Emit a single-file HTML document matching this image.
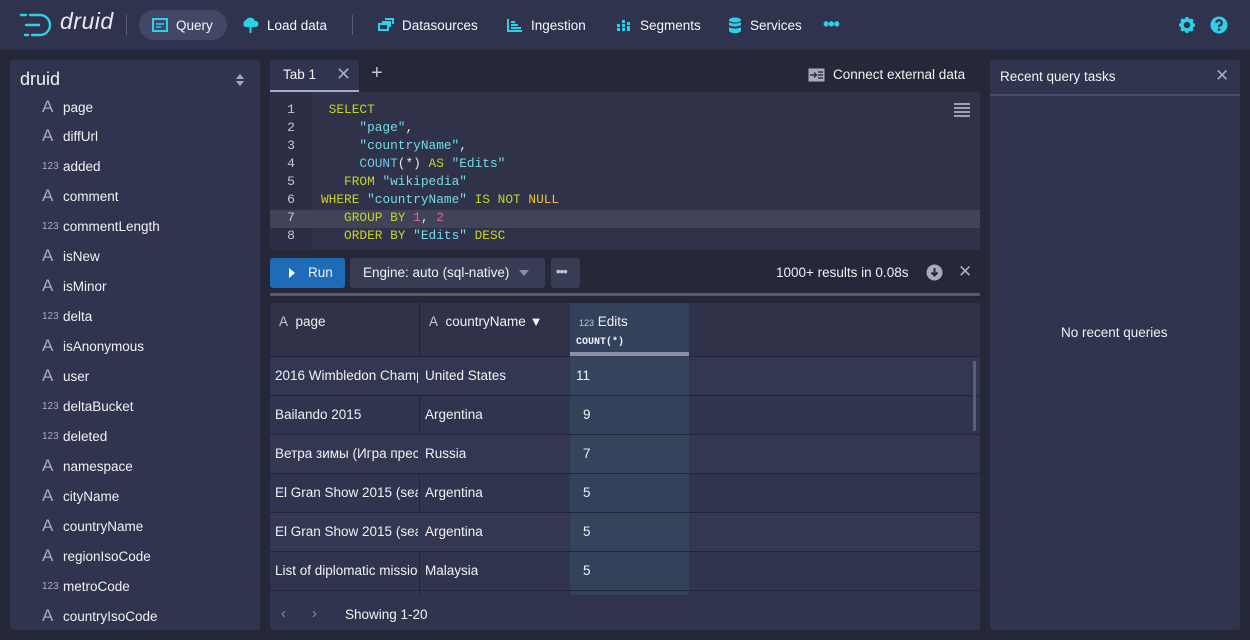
<!DOCTYPE html>
<html><head><meta charset="utf-8"><style>
*{box-sizing:border-box;margin:0;padding:0}
body{width:1250px;height:640px;background:#252839;font-family:"Liberation Sans",sans-serif;color:#f0f2f5;font-size:13.5px;position:relative;overflow:hidden}
.abs{position:absolute}
.nav{left:0;top:0;width:1250px;height:50px;background:#30334d}
.ni{position:absolute;top:0;height:50px;display:flex;align-items:center;font-size:13.5px;color:#f5f8fa}
.ni svg{margin-right:8px}
.panel{background:#30344e;border-radius:3px}
.col{position:absolute;left:42px;font-size:13.5px;display:flex;align-items:center;height:20px}
.col .ic{width:21px;color:#a7abbd;font-size:17px;text-align:left}
.col .n{width:21px;color:#a7abbd;font-size:10px}
.code{font-family:"Liberation Mono",monospace;font-size:12.8px;white-space:pre;position:absolute;left:0;line-height:18px}
.kw{color:#c6d22b}.st{color:#75dbe6}.fn{color:#6fc8e6}.nm{color:#f058b8}.wh{color:#e8e8e8}.nul{color:#f0c030}
.ln{position:absolute;left:270px;width:42px;text-align:center;font-family:"Liberation Mono",monospace;font-size:13px;color:#c4c7d2;line-height:18px}
.row{position:absolute;left:270px;width:710px;height:39px;border-bottom:1px solid #23263a;font-size:13.5px}
.row div{position:absolute;top:0;height:38px;line-height:38px;overflow:hidden;white-space:nowrap}
</style></head><body>
<div class="abs nav"></div>
<svg class="abs" style="left:18px;top:12px" width="38" height="26" viewBox="0 0 38 26"><g fill="none" stroke="#2ed0e8" stroke-width="2.4" stroke-linecap="round"><path d="M12 3h10a10 10 0 0 1 0 20H14"/><path d="M8 13h13"/><path d="M3 3h5"/><path d="M7 23h3"/></g></svg>
<div class="abs" style="left:60px;top:8px;font-size:23px;color:#e8eaf0;font-style:italic;font-weight:300;letter-spacing:0.5px">druid</div>
<div class="abs" style="left:126px;top:15px;width:1px;height:20px;background:#5a5e78"></div>
<div class="abs" style="left:139px;top:10px;width:88px;height:30px;border-radius:15px;background:#434766"></div>
<div class="ni" style="left:152px"><svg width="16" height="14" viewBox="0 0 16 14"><rect x="1" y="1" width="14" height="12" fill="none" stroke="#2ed0e8" stroke-width="2"/><path d="M4 6h8M4 9h5" stroke="#2ed0e8" stroke-width="1.6"/></svg>Query</div>
<div class="ni" style="left:242px"><svg width="17" height="16" viewBox="0 0 17 16"><path d="M3 10a4 4 0 0 1 1-7 5 5 0 0 1 9 1 3 3 0 0 1 1 6h-3l-2.5-3L6 10z" fill="#2ed0e8"/><path d="M8.5 7v9M5.5 10l3-3 3 3" stroke="#2ed0e8" stroke-width="2" fill="none"/></svg>Load data</div>
<div class="abs" style="left:352px;top:15px;width:1px;height:20px;background:#5a5e78"></div>
<div class="ni" style="left:378px"><svg width="16" height="14" viewBox="0 0 16 14"><rect x="1" y="6" width="9" height="6" fill="none" stroke="#2ed0e8" stroke-width="2"/><path d="M4 4h8v5M7 1h8v5" fill="none" stroke="#2ed0e8" stroke-width="2"/></svg>Datasources</div>
<div class="ni" style="left:507px"><svg width="16" height="14" viewBox="0 0 16 14"><path d="M1 1v12h14M4 4h4M4 7h7M4 10h10" stroke="#2ed0e8" stroke-width="2" fill="none"/></svg>Ingestion</div>
<div class="ni" style="left:616px"><svg width="16" height="14" viewBox="0 0 16 14"><g fill="#2ed0e8"><rect x="1" y="6" width="3" height="3"/><rect x="1" y="10" width="3" height="3"/><rect x="6" y="2" width="3" height="3"/><rect x="6" y="6" width="3" height="3"/><rect x="6" y="10" width="3" height="3"/><rect x="11" y="4" width="3" height="3"/><rect x="11" y="8" width="3" height="5"/></g></svg>Segments</div>
<div class="ni" style="left:728px"><svg width="14" height="17" viewBox="0 0 14 17"><g fill="#2ed0e8"><ellipse cx="7" cy="3" rx="6" ry="2.5"/><path d="M1 5c2 2 10 2 12 0v3c-2 2-10 2-12 0z"/><path d="M1 10c2 2 10 2 12 0v4c-2 3-10 3-12 0z"/></g></svg>Services</div>
<div class="abs" style="left:823px;top:14px;color:#2ed0e8;font-size:18px;font-weight:bold;letter-spacing:-1px">•••</div>
<svg class="abs" style="left:1178px;top:16px" width="18" height="18" viewBox="0 0 18 18"><circle cx="9" cy="9" r="5" fill="none" stroke="#2ed0e8" stroke-width="3.5"/><g stroke="#2ed0e8" stroke-width="3"><path d="M9 1v3M9 14v3M1 9h3M14 9h3M3.3 3.3l2.1 2.1M12.6 12.6l2.1 2.1M3.3 14.7l2.1-2.1M12.6 5.4l2.1-2.1"/></g></svg>
<svg class="abs" style="left:1210px;top:16px" width="18" height="18" viewBox="0 0 18 18"><circle cx="9" cy="9" r="8.5" fill="#2ed0e8"/><path d="M6.3 7a2.7 2.7 0 1 1 3.5 2.5c-.6.3-.8.7-.8 1.5" stroke="#30334d" stroke-width="2.2" fill="none"/><circle cx="9" cy="13.6" r="1.3" fill="#30334d"/></svg>

<div class="abs panel" style="left:10px;top:60px;width:250px;height:570px"></div>
<div class="abs" style="left:20px;top:69px;font-size:18px">druid</div>
<svg class="abs" style="left:235px;top:73px" width="10" height="14" viewBox="0 0 10 14"><path d="M1 6l4-5 4 5zM1 8l4 5 4-5z" fill="#a7abbd"/></svg>
<div class="col" style="top:97px"><span class="ic">A</span>page</div>
<div class="col" style="top:126px"><span class="ic">A</span>diffUrl</div>
<div class="col" style="top:156px"><span class="n">123</span>added</div>
<div class="col" style="top:186px"><span class="ic">A</span>comment</div>
<div class="col" style="top:216px"><span class="n">123</span>commentLength</div>
<div class="col" style="top:246px"><span class="ic">A</span>isNew</div>
<div class="col" style="top:276px"><span class="ic">A</span>isMinor</div>
<div class="col" style="top:306px"><span class="n">123</span>delta</div>
<div class="col" style="top:336px"><span class="ic">A</span>isAnonymous</div>
<div class="col" style="top:366px"><span class="ic">A</span>user</div>
<div class="col" style="top:396px"><span class="n">123</span>deltaBucket</div>
<div class="col" style="top:426px"><span class="n">123</span>deleted</div>
<div class="col" style="top:456px"><span class="ic">A</span>namespace</div>
<div class="col" style="top:486px"><span class="ic">A</span>cityName</div>
<div class="col" style="top:516px"><span class="ic">A</span>countryName</div>
<div class="col" style="top:546px"><span class="ic">A</span>regionIsoCode</div>
<div class="col" style="top:576px"><span class="n">123</span>metroCode</div>
<div class="col" style="top:606px"><span class="ic">A</span>countryIsoCode</div>

<div class="abs" style="left:270px;top:60px;width:89px;height:32px;background:#30344e;border-radius:3px 3px 0 0;border-bottom:2px solid #a7abbd"></div>
<div class="abs" style="left:283px;top:67px">Tab 1</div>
<div class="abs" style="left:336px;top:64px;font-size:18px;color:#a7abbd">✕</div>
<div class="abs" style="left:371px;top:62px;font-size:20px;color:#c4c7d2">+</div>
<svg class="abs" style="left:808px;top:68px" width="17" height="14" viewBox="0 0 17 14"><rect x="0.5" y="0.5" width="16" height="13" fill="#a7abbd"/><path d="M2 7h6M6 4.5L8.5 7 6 9.5M10 4h5M10 7h5M10 10h5" stroke="#30334d" stroke-width="1.5" fill="none"/></svg>
<div class="abs" style="left:833px;top:67px">Connect external data</div>

<div class="abs" style="left:270px;top:92px;width:710px;height:158px;background:#2f3249"></div>
<div class="abs" style="left:270px;top:92px;width:42px;height:158px;background:#2b2e44"></div>
<div class="abs" style="left:270px;top:210px;width:710px;height:18px;background:#414459"></div>
<div class="ln" style="top:101px">1<br>2<br>3<br>4<br>5<br>6<br>7<br>8</div>
<svg class="abs" style="left:954px;top:103px" width="16" height="14" viewBox="0 0 16 14"><path d="M0 1h16M0 5h16M0 9h16M0 13h16" stroke="#c4c7d2" stroke-width="1.6"/></svg>
<div class="abs" style="left:321px;top:101px;width:660px;height:150px">
<div class="code" style="top:0"><span class="kw"> SELECT</span>
<span class="st">     "page"</span><span class="wh">,</span>
<span class="st">     "countryName"</span><span class="wh">,</span>
<span class="fn">     COUNT</span><span class="wh">(*)</span> <span class="kw">AS</span> <span class="st">"Edits"</span>
<span class="kw">   FROM</span> <span class="st">"wikipedia"</span>
<span class="kw">WHERE</span> <span class="st">"countryName"</span> <span class="kw">IS NOT</span> <span class="nul">NULL</span>
<span class="kw">   GROUP BY</span> <span class="nm">1</span><span class="wh">,</span> <span class="nm">2</span>
<span class="kw">   ORDER BY</span> <span class="st">"Edits"</span> <span class="kw">DESC</span></div>
</div>

<div class="abs" style="left:270px;top:258px;width:75px;height:30px;background:#1e6cb8;border-radius:3px"></div>
<svg class="abs" style="left:288px;top:268px" width="8" height="10" viewBox="0 0 8 10"><path d="M1 0l6 5-6 5z" fill="#fff"/></svg>
<div class="abs" style="left:308px;top:265px">Run</div>
<div class="abs" style="left:350px;top:258px;width:195px;height:30px;background:#383c55;border-radius:3px"></div>
<div class="abs" style="left:363px;top:265px">Engine: auto (sql-native)</div>
<svg class="abs" style="left:519px;top:270px" width="10" height="6" viewBox="0 0 10 6"><path d="M0 0h10L5 6z" fill="#8a8ea4"/></svg>
<div class="abs" style="left:551px;top:258px;width:29px;height:30px;background:#383c55;border-radius:3px"></div>
<div class="abs" style="left:556px;top:264px;color:#c4c7d2;font-weight:bold;font-size:13px;letter-spacing:-1px">•••</div>
<div class="abs" style="left:776px;top:265px">1000+ results in 0.08s</div>
<svg class="abs" style="left:926px;top:264px" width="17" height="17" viewBox="0 0 17 17"><circle cx="8.5" cy="8.5" r="8" fill="#a7abbd"/><path d="M8.5 4v7M5.5 8.5l3 3 3-3" stroke="#252839" stroke-width="2" fill="none"/></svg>
<div class="abs" style="left:958px;top:262px;font-size:17px;color:#a7abbd">✕</div>
<div class="abs" style="left:270px;top:293px;width:710px;height:3px;background:#545872"></div>

<div class="abs" style="left:270px;top:303px;width:710px;height:292px;background:#30344e"></div>
<div class="abs" style="left:270px;top:303px;width:710px;height:54px;background:#2f3249;border-bottom:1px solid #23263a"></div>
<div class="abs" style="left:419px;top:303px;width:1px;height:292px;background:#23263a"></div>
<div class="abs" style="left:570px;top:303px;width:119px;height:292px;background:#33415a"></div>
<div class="abs" style="left:570px;top:352px;width:119px;height:4px;background:#8a8ea4"></div>
<div class="abs" style="left:279px;top:314px"><span style="color:#c4c7d2">A</span>&nbsp; page</div>
<div class="abs" style="left:429px;top:314px"><span style="color:#c4c7d2">A</span>&nbsp; countryName <span style="font-size:13px">▼</span></div>
<div class="abs" style="left:579px;top:314px"><span style="font-size:9px;color:#c4c7d2">123</span> Edits</div>
<div class="abs" style="left:576px;top:337px;font-family:'Liberation Mono',monospace;font-size:10px;font-weight:bold">COUNT(*)</div>

<div class="row" style="top:357px;background:#343751"><div style="left:5px;width:143px">2016 Wimbledon Championships</div><div style="left:155px">United States</div><div style="left:300px;width:119px;background:#35435c;padding-left:6px">11</div></div>
<div class="row" style="top:396px"><div style="left:5px;width:143px">Bailando 2015</div><div style="left:155px">Argentina</div><div style="left:300px;width:119px;background:#33415a;padding-left:13px">9</div></div>
<div class="row" style="top:435px;background:#343751"><div style="left:5px;width:143px">Ветра зимы (Игра престолов)</div><div style="left:155px">Russia</div><div style="left:300px;width:119px;background:#35435c;padding-left:13px">7</div></div>
<div class="row" style="top:474px"><div style="left:5px;width:143px">El Gran Show 2015 (season</div><div style="left:155px">Argentina</div><div style="left:300px;width:119px;background:#33415a;padding-left:13px">5</div></div>
<div class="row" style="top:513px;background:#343751"><div style="left:5px;width:143px">El Gran Show 2015 (season</div><div style="left:155px">Argentina</div><div style="left:300px;width:119px;background:#35435c;padding-left:13px">5</div></div>
<div class="row" style="top:552px"><div style="left:5px;width:143px">List of diplomatic missions</div><div style="left:155px">Malaysia</div><div style="left:300px;width:119px;background:#33415a;padding-left:13px">5</div></div>
<div class="abs" style="left:973px;top:361px;width:3px;height:70px;background:#5a5e78"></div>
<div class="abs" style="left:270px;top:595px;width:710px;height:35px;background:#30344e;border-radius:0 0 3px 3px"></div>
<div class="abs" style="left:281px;top:605px;color:#8a8ea4;font-size:15px">‹</div>
<div class="abs" style="left:312px;top:605px;color:#8a8ea4;font-size:15px">›</div>
<div class="abs" style="left:345px;top:607px">Showing 1-20</div>

<div class="abs panel" style="left:990px;top:60px;width:250px;height:570px"></div>
<div class="abs" style="left:990px;top:94px;width:250px;height:2px;background:#4a4e68"></div>
<div class="abs" style="left:1000px;top:69px">Recent query tasks</div>
<div class="abs" style="left:1215px;top:66px;font-size:17px;color:#a7abbd">✕</div>
<div class="abs" style="left:1061px;top:325px">No recent queries</div>
</body></html>
